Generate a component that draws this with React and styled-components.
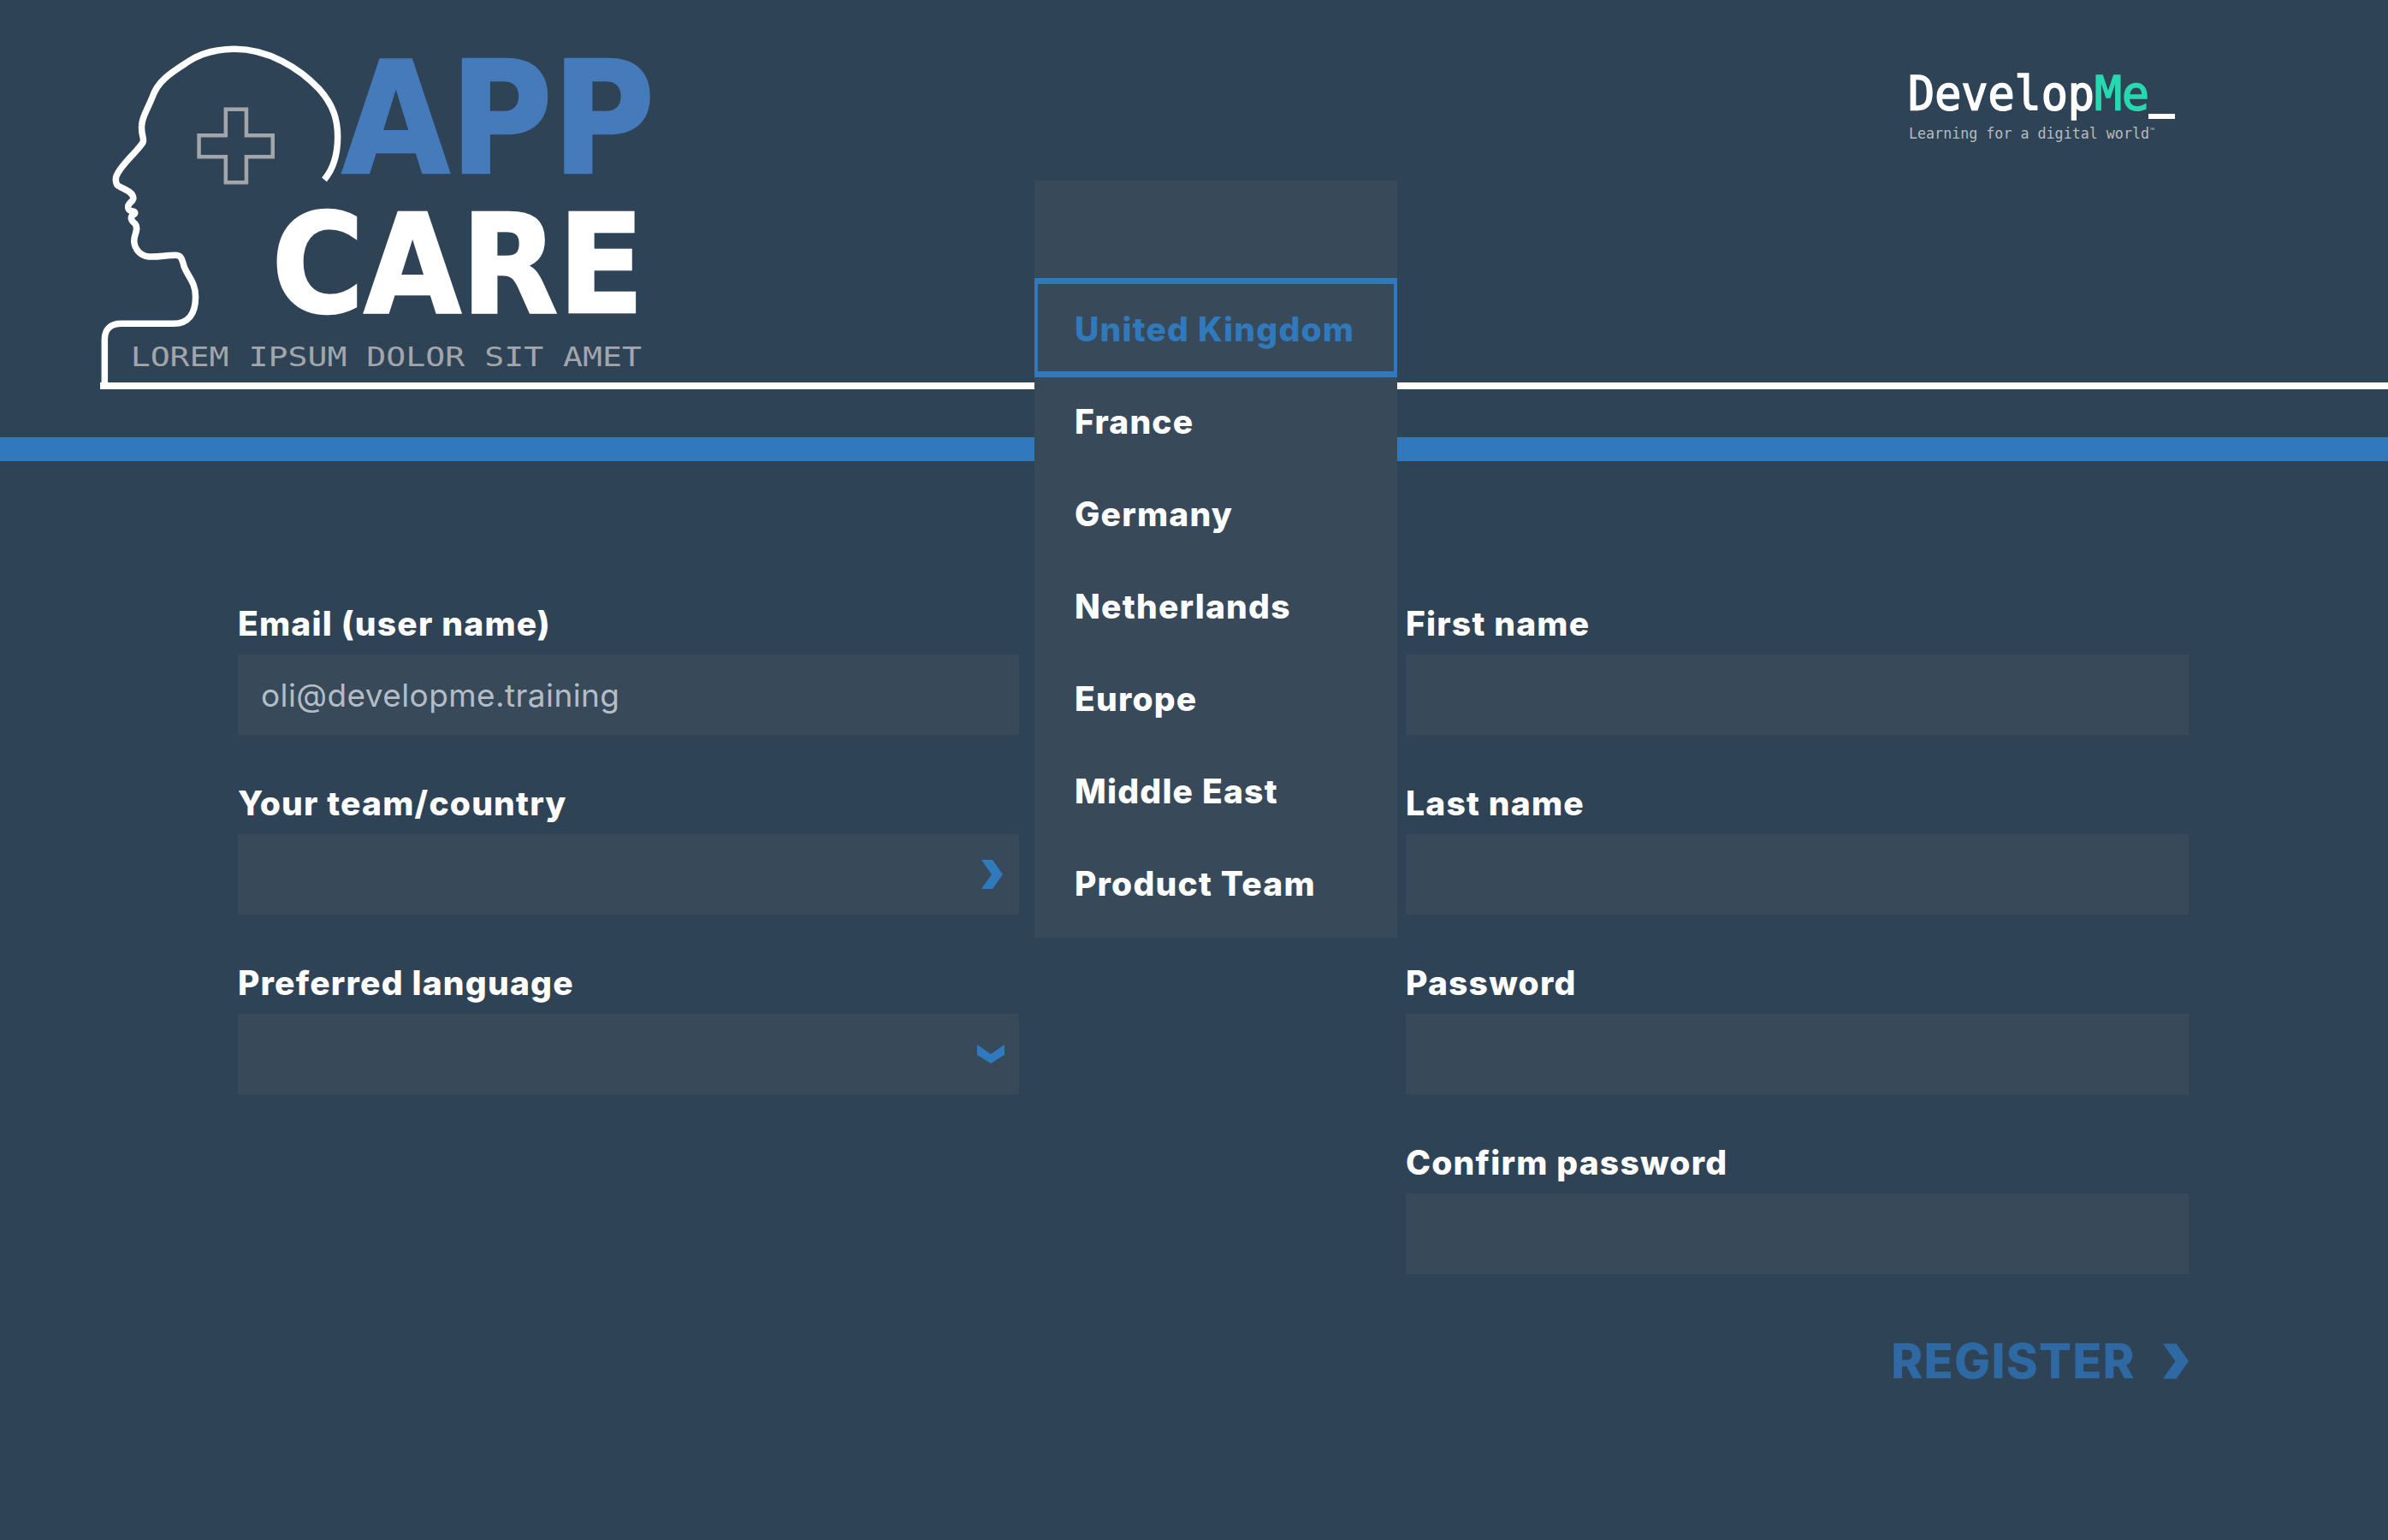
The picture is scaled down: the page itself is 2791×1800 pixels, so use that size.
import React from "react";
import styled, { createGlobalStyle } from "styled-components";

const GlobalStyle = createGlobalStyle`
  html, body {
    margin: 0;
    background: #2f4356;
  }
  body {
    font-family: Inter, "Liberation Sans", sans-serif;
    -webkit-font-smoothing: antialiased;
  }
`;

const AppLogo = () => (
  <LogoSvg viewBox="0 0 1568 1275" width="700" height="425" preserveAspectRatio="none">
    <path
      d="M50 1262 L50 1100 C50 1065 65 1045 93 1045 L230 1045 C270 1045 288 1010 288 950 C288 900 268 880 258 845 C252 815 250 805 235 805 C210 805 190 812 165 810 C140 805 128 780 127 755 C127 730 140 715 130 695 C118 682 118 672 122 665 C132 660 132 652 122 650 C112 648 110 640 112 630 C115 620 125 615 125 605 C125 585 105 575 90 565 C80 560 78 545 80 530 C90 490 130 450 150 410 C155 395 145 385 147 350 C148 320 160 300 175 250 C190 190 230 160 270 125 C310 90 350 82 390 82 C480 82 560 150 610 220 C650 280 660 330 660 390 C660 450 650 500 625 540"
      fill="none"
      stroke="#fff"
      strokeWidth="7.5"
      strokeLinejoin="round"
      vectorEffect="non-scaling-stroke"
    />
    <polygon
      points="367,293 421,293 421,385 490,385 490,460 421,460 421,550 367,550 367,460 297,460 297,385 367,385"
      fill="none"
      stroke="#a2a6aa"
      strokeWidth="4.5"
      vectorEffect="non-scaling-stroke"
    />
    <LogoWord x="671" y="516" fontSize="545" textLength="819" lengthAdjust="spacingAndGlyphs" fill="#457abb" stroke="#457abb">
      APP
    </LogoWord>
    <LogoWord x="487" y="1004" fontSize="483" textLength="975" lengthAdjust="spacingAndGlyphs" fill="#fff" stroke="#fff">
      CARE
    </LogoWord>
    <LogoTagline x="118" y="1193" fontSize="97" textLength="1338" lengthAdjust="spacingAndGlyphs" fill="#a2a6aa">
      LOREM IPSUM DOLOR SIT AMET
    </LogoTagline>
  </LogoSvg>
);

const BrandLogo = () => (
  <BrandSvg viewBox="0 0 360 120" width="360" height="120">
    <BrandWord x="30" y="68" fontSize="55" textLength="218" lengthAdjust="spacingAndGlyphs" fill="#fff" stroke="#fff">
      Develop
    </BrandWord>
    <BrandWord x="248" y="68" fontSize="55" textLength="64" lengthAdjust="spacingAndGlyphs" fill="#26d9b0" stroke="#26d9b0">
      Me
    </BrandWord>
    <rect x="311" y="73" width="31" height="6" fill="#fff" />
    <BrandTagline x="31" y="102" fontSize="17" textLength="281" lengthAdjust="spacingAndGlyphs" fill="#b4bcc2">
      Learning for a digital world
    </BrandTagline>
    <BrandTagline x="313" y="96" fontSize="9" fill="#b4bcc2">
      ™
    </BrandTagline>
  </BrandSvg>
);

const ChevronRight = ({ large }) => (
  <svg width={large ? 30 : 25} height={large ? 42 : 34} viewBox="0 0 25 34">
    <polygon points="0,0 13,0 25,17 13,34 0,34 12,17" fill="currentColor" />
  </svg>
);

const ChevronDown = () => (
  <svg width="32" height="22" viewBox="0 0 32 22">
    <polygon points="0,0 16,11 32,0 32,12 16,22 0,12" fill="currentColor" />
  </svg>
);

const Field = ({ label, value, icon }) => (
  <FieldWrap>
    <Label>{label}</Label>
    <InputBox>
      <span>{value}</span>
      {icon}
    </InputBox>
  </FieldWrap>
);

const countries = ["France", "Germany", "Netherlands", "Europe", "Middle East", "Product Team"];

export default function App() {
  return (
    <Page>
      <GlobalStyle />
      <Header>
        <AppLogo />
        <BrandLogo />
      </Header>
      <BlueBar />
      <Form>
        <Column>
          <Field label="Email (user name)" value="oli@developme.training" />
          <Field label="Your team/country" icon={<IconSlot $right={19}><ChevronRight /></IconSlot>} />
          <Field label="Preferred language" icon={<IconSlot $right={17}><ChevronDown /></IconSlot>} />
        </Column>
        <Column>
          <Field label="First name" />
          <Field label="Last name" />
          <Field label="Password" />
          <Field label="Confirm password" />
          <Register>
            <span>REGISTER</span>
            <ChevronRight large />
          </Register>
        </Column>
      </Form>
      <Menu>
        <MenuBlank />
        <MenuSelected>United Kingdom</MenuSelected>
        {countries.map(name => (
          <MenuItem key={name}>{name}</MenuItem>
        ))}
      </Menu>
    </Page>
  );
}

const Page = styled.div`
  position: relative;
  width: 2791px;
  height: 1800px;
  overflow: hidden;
  background: #2f4356;
`;
const Header = styled.header`
  box-sizing: border-box;
  display: flex;
  justify-content: space-between;
  align-items: flex-start;
  height: 455px;
  margin-left: 117px;
  padding-right: 231px;
  border-bottom: 8px solid #fff;
`;
const LogoSvg = styled.svg`
  display: block;
  flex: none;
  margin: 30px 0 0 -17px;
  overflow: visible;
`;
const LogoWord = styled.text`
  font-family: "DejaVu Sans", sans-serif;
  font-weight: 700;
  stroke-width: 8px;
`;
const LogoTagline = styled.text`
  font-family: "DejaVu Sans Mono", monospace;
`;
const BrandSvg = styled.svg`
  display: block;
  flex: none;
  margin-top: 60px;
`;
const BrandWord = styled.text`
  font-family: "DejaVu Sans Mono", monospace;
  stroke-width: 1.6px;
`;
const BrandTagline = styled.text`
  font-family: "DejaVu Sans Mono", monospace;
`;
const BlueBar = styled.div`
  height: 28px;
  margin-top: 56px;
  background: #3079bd;
`;
const Form = styled.form`
  display: grid;
  grid-template-columns: 913px 915px;
  column-gap: 452px;
  padding: 164px 0 0 278px;
`;
const Column = styled.div`
  display: flex;
  flex-direction: column;
`;
const FieldWrap = styled.div`
  display: flex;
  flex-direction: column;
  margin-bottom: 54px;
`;
const Label = styled.label`
  height: 50px;
  margin-bottom: 12px;
  font-size: 39px;
  line-height: 52px;
  font-weight: 800;
  letter-spacing: 1.2px;
  color: #fff;
`;
const InputBox = styled.div`
  position: relative;
  display: flex;
  align-items: center;
  height: 94px;
  padding: 0 27px;
  background: #384a5a;
  font-size: 37px;
  letter-spacing: 0.4px;
  color: #b4bcc6;
`;
const IconSlot = styled.span`
  position: absolute;
  top: 50%;
  right: ${props => props.$right}px;
  display: flex;
  transform: translateY(-50%);
  color: #3079bd;
`;
const Register = styled.div`
  display: flex;
  justify-content: flex-end;
  align-items: center;
  gap: 32px;
  margin-top: 16px;
  font-size: 56px;
  line-height: 64px;
  font-weight: 800;
  letter-spacing: 1.3px;
  color: #2e69a3;
`;
const Menu = styled.div`
  position: absolute;
  top: 211px;
  left: 1209px;
  width: 424px;
  padding-bottom: 9px;
  background: #384a5a;
`;
const MenuBlank = styled.div`
  height: 114px;
`;
const MenuItem = styled.div`
  box-sizing: border-box;
  display: flex;
  align-items: center;
  height: 108px;
  padding: 0 0 2px 47px;
  font-size: 39px;
  font-weight: 800;
  letter-spacing: 1.2px;
  color: #fff;
`;
const MenuSelected = styled(MenuItem)`
  height: 116px;
  margin-bottom: -2px;
  padding: 2px 0 0 43px;
  border-style: solid;
  border-width: 7px 4px;
  border-color: #3079bd;
  color: #3079bd;
`;
